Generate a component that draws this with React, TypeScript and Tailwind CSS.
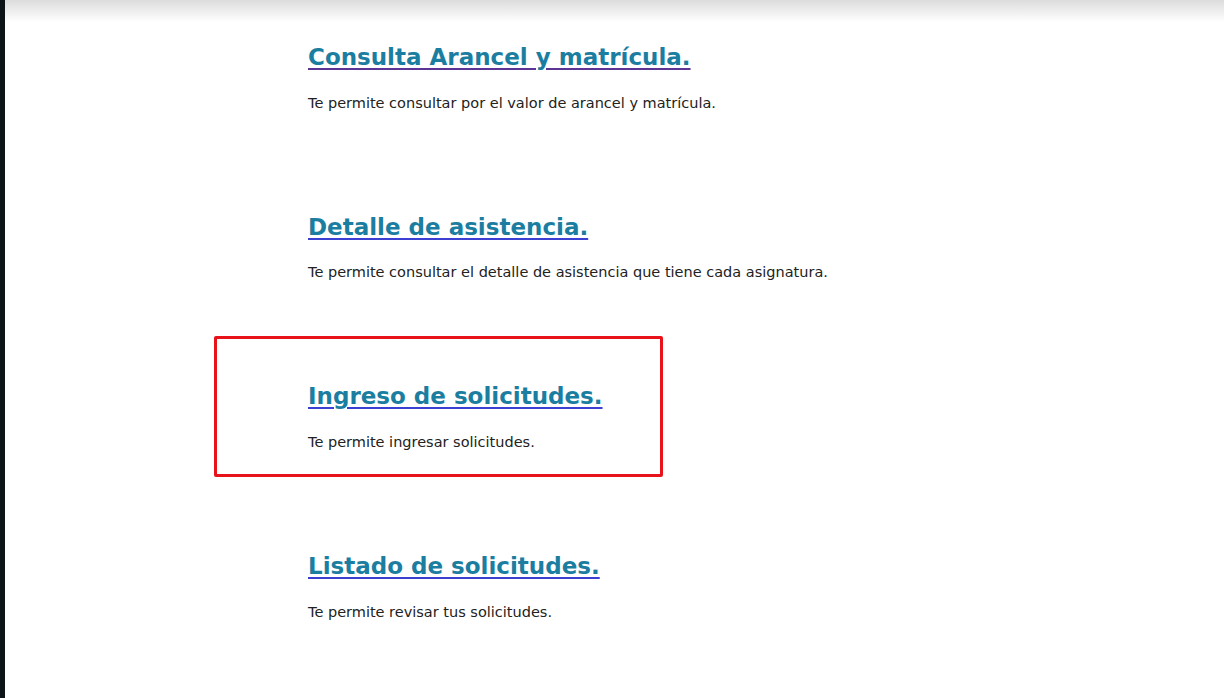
const items = [
  {
    title: "Consulta Arancel y matrícula.",
    desc: "Te permite consultar por el valor de arancel y matrícula.",
    visited: true,
  },
  {
    title: "Detalle de asistencia.",
    desc: "Te permite consultar el detalle de asistencia que tiene cada asignatura.",
  },
  {
    title: "Ingreso de solicitudes.",
    desc: "Te permite ingresar solicitudes.",
    marked: true,
  },
  {
    title: "Listado de solicitudes.",
    desc: "Te permite revisar tus solicitudes.",
  },
];

export default function App() {
  return (
    <div className="flex h-[698px] w-[1224px] overflow-hidden bg-white font-['DejaVu_Sans',Verdana,sans-serif]">
      {/* dark strip on the left edge */}
      <div className="w-[5px] shrink-0 bg-[#0b1417]" />

      <div className="relative flex-1">
        <div className="h-[22px] bg-gradient-to-b from-[#dcdcdc] to-white" />

        <main className="pl-[303px] pt-[18px]">
          {items.map((item) => (
            <section key={item.title} className="relative h-[169.7px]">
              {item.marked && (
                <div className="absolute -top-[43px] left-[-94px] h-[141px] w-[449px] rounded-[2px] border-[3px] border-[#e8121b]" />
              )}
              <a
                href="#"
                className={
                  "text-[23px] font-bold text-[#1b7ea1] underline decoration-2 underline-offset-[3px] " +
                  (item.visited ? "decoration-[#5b3596]" : "decoration-[#3b3fd2]")
                }
              >
                {item.title}
              </a>
              <p className="mt-[18px] text-[14.5px] text-[#222]">{item.desc}</p>
            </section>
          ))}
        </main>
      </div>
    </div>
  );
}
